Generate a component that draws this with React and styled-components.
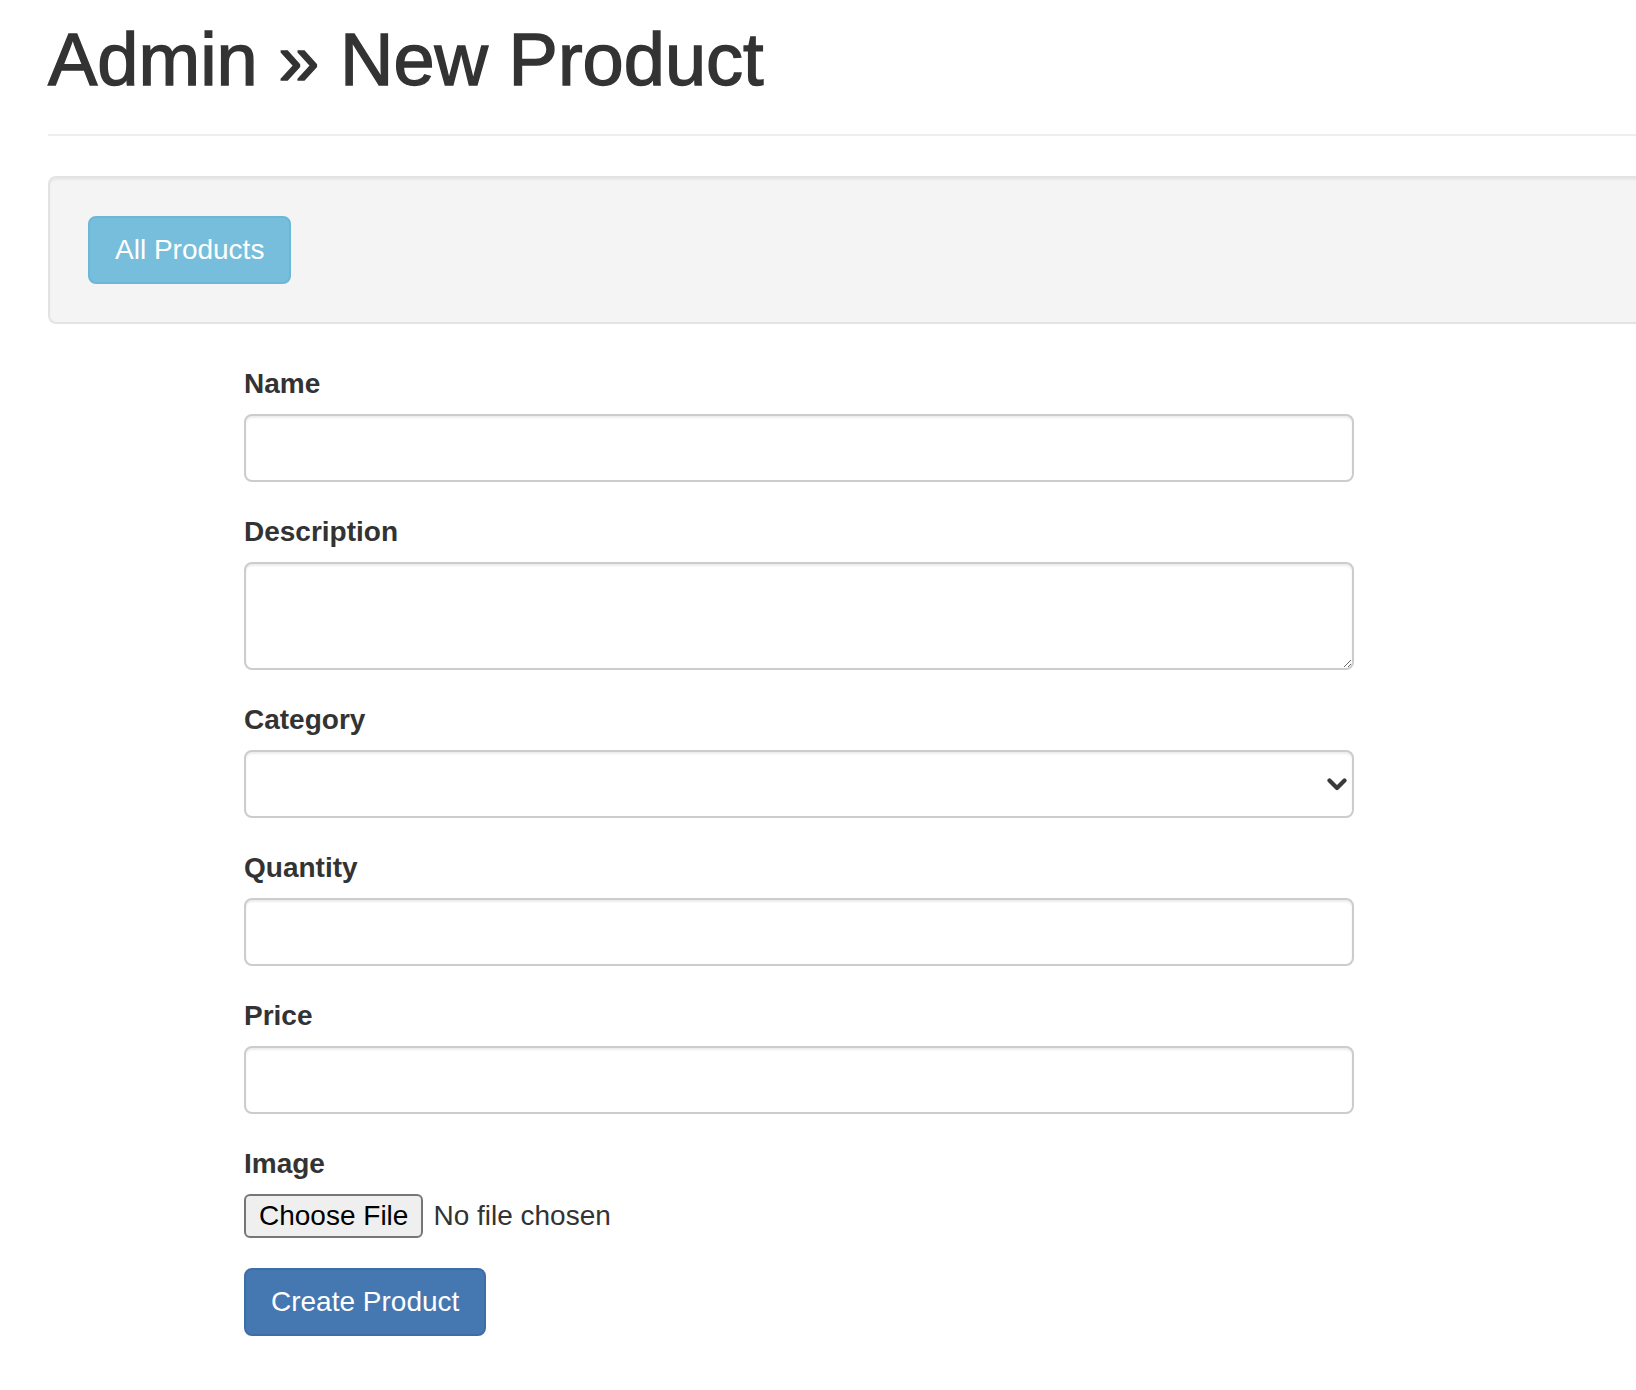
import React from 'react';
import styled, { createGlobalStyle } from 'styled-components';

const GlobalStyle = createGlobalStyle`
  html, body {
    margin: 0;
    padding: 0;
    background: #fff;
    overflow-x: hidden;
  }
  body {
    font-family: "Liberation Sans", Helvetica, Arial, sans-serif;
    color: #333;
  }
  * {
    box-sizing: border-box;
  }
`;

const Container = styled.div`
  width: 2280px;
  margin-left: 48px;
  padding-top: 19px;
  padding-bottom: 55px;
`;

const PageHeader = styled.div`
  padding-bottom: 34px;
  border-bottom: 2px solid #eee;
`;

const Title = styled.h1`
  margin: 0;
  font-size: 74px;
  font-weight: 500;
  line-height: 81px;
  color: #333;
  -webkit-text-stroke: 1.4px #333;
`;

const Well = styled.div`
  margin-top: 40px;
  margin-bottom: 40px;
  padding: 38px;
  background: #f4f4f4;
  border: 2px solid #e3e3e3;
  border-radius: 8px;
  box-shadow: inset 0 2px 2px rgba(0, 0, 0, 0.05);
`;

const Button = styled.button`
  display: inline-block;
  padding: 12px 25px;
  font-family: inherit;
  font-size: 28px;
  line-height: 40px;
  color: #fff;
  background: ${props => (props.$variant === 'info' ? '#76bedb' : '#4577b1')};
  border: 2px solid ${props => (props.$variant === 'info' ? '#6cb6d6' : '#3f6ea6')};
  border-radius: 8px;
  cursor: pointer;
`;

const Form = styled.form`
  width: 1110px;
  margin-left: 196px;
`;

const Group = styled.div`
  margin-bottom: 30px;
`;

const Label = styled.label`
  display: block;
  margin-bottom: 10px;
  font-size: 28px;
  font-weight: 700;
  line-height: 40px;
  color: #333;
`;

const fieldStyles = `
  display: block;
  width: 100%;
  padding: 12px 24px;
  font-family: inherit;
  font-size: 28px;
  line-height: 40px;
  color: #555;
  background: #fff;
  border: 2px solid #ccc;
  border-radius: 8px;
  box-shadow: inset 0 2px 2px rgba(0, 0, 0, 0.075);
  outline: none;
`;

const Input = styled.input`
  ${fieldStyles}
  height: 68px;
`;

const TextArea = styled.textarea`
  ${fieldStyles}
  height: 108px;
  resize: vertical;
`;

const SelectWrap = styled.div`
  position: relative;
`;

const Select = styled.select`
  ${fieldStyles}
  height: 68px;
  appearance: none;
  -webkit-appearance: none;
`;

const Chevron = styled.svg`
  position: absolute;
  right: 7px;
  top: 28px;
  pointer-events: none;
`;

const FileInput = styled.input`
  display: block;
  font-family: inherit;
  font-size: 28px;
  line-height: 32px;
  color: #333;

  &::file-selector-button {
    margin-right: 10px;
    padding: 4px 13px;
    font-family: inherit;
    font-size: 28px;
    line-height: 32px;
    color: #000;
    background: #efefef;
    border: 2px solid #767676;
    border-radius: 6px;
  }
`;

const fields = [
  { id: 'name', label: 'Name', kind: 'input' },
  { id: 'description', label: 'Description', kind: 'textarea' },
  { id: 'category', label: 'Category', kind: 'select' },
  { id: 'quantity', label: 'Quantity', kind: 'input' },
  { id: 'price', label: 'Price', kind: 'input' },
];

const Field = ({ id, kind }) => {
  if (kind === 'textarea') return <TextArea id={id} />;
  if (kind === 'select') {
    return (
      <SelectWrap>
        <Select id={id} defaultValue="">
          <option value="" />
        </Select>
        <Chevron width="20" height="13" viewBox="0 0 20 13">
          <polyline points="2.5,2.5 10,10 17.5,2.5" fill="none" stroke="#3a3a3a" strokeWidth="4.2" strokeLinecap="round" strokeLinejoin="round" />
        </Chevron>
      </SelectWrap>
    );
  }
  return <Input id={id} type="text" />;
};

export default function App() {
  return (
    <>
      <GlobalStyle />
      <Container>
        <PageHeader>
          <Title>Admin » New Product</Title>
        </PageHeader>
        <Well>
          <Button type="button" $variant="info">All Products</Button>
        </Well>
        <Form onSubmit={e => e.preventDefault()}>
          {fields.map(f => (
            <Group key={f.id}>
              <Label htmlFor={f.id}>{f.label}</Label>
              <Field id={f.id} kind={f.kind} />
            </Group>
          ))}
          <Group>
            <Label htmlFor="image">Image</Label>
            <FileInput id="image" type="file" />
          </Group>
          <Button type="submit" $variant="primary">Create Product</Button>
        </Form>
      </Container>
    </>
  );
}
